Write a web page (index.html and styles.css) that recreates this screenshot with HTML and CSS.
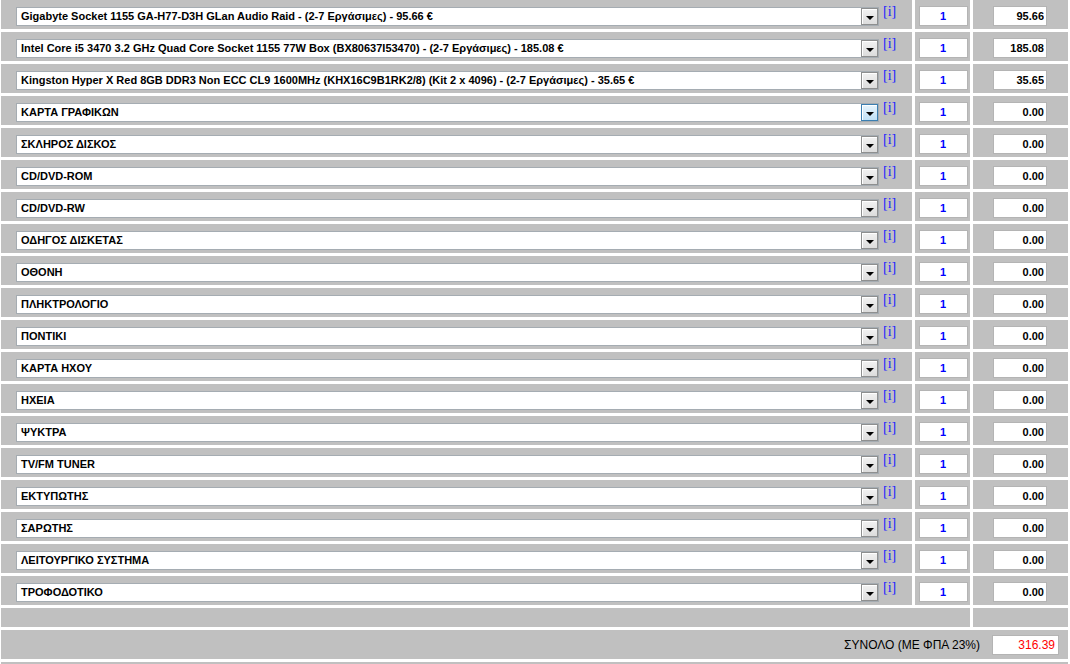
FILE: index.html
```html
<!DOCTYPE html>
<html lang="el">
<head>
    <meta charset="UTF-8">
    <meta name="viewport" content="width=device-width, initial-scale=1.0">
    <title>Σύνθεση Υπολογιστή</title>
    <link rel="stylesheet" href="styles.css">
</head>
<body>
    <div class="builder">
        <div class="cell part"><div class="combo"><span class="combo-text">Gigabyte Socket 1155 GA-H77-D3H GLan Audio Raid - (2-7 Εργάσιμες) - 95.66 €</span><span class="combo-btn"><span class="arrow"></span></span></div><a href="#" class="info">[i]</a></div>
        <div class="cell qty"><input class="qty-box" type="text" value="1" readonly></div>
        <div class="cell price"><input class="price-box" type="text" value="95.66" readonly></div>

        <div class="cell part"><div class="combo"><span class="combo-text">Intel Core i5 3470 3.2 GHz Quad Core Socket 1155 77W Box (BX80637I53470) - (2-7 Εργάσιμες) - 185.08 €</span><span class="combo-btn"><span class="arrow"></span></span></div><a href="#" class="info">[i]</a></div>
        <div class="cell qty"><input class="qty-box" type="text" value="1" readonly></div>
        <div class="cell price"><input class="price-box" type="text" value="185.08" readonly></div>

        <div class="cell part"><div class="combo"><span class="combo-text">Kingston Hyper X Red 8GB DDR3 Non ECC CL9 1600MHz (KHX16C9B1RK2/8) (Kit 2 x 4096) - (2-7 Εργάσιμες) - 35.65 €</span><span class="combo-btn"><span class="arrow"></span></span></div><a href="#" class="info">[i]</a></div>
        <div class="cell qty"><input class="qty-box" type="text" value="1" readonly></div>
        <div class="cell price"><input class="price-box" type="text" value="35.65" readonly></div>

        <div class="cell part"><div class="combo"><span class="combo-text">ΚΑΡΤΑ ΓΡΑΦΙΚΩΝ</span><span class="combo-btn hover"><span class="arrow"></span></span></div><a href="#" class="info">[i]</a></div>
        <div class="cell qty"><input class="qty-box" type="text" value="1" readonly></div>
        <div class="cell price"><input class="price-box" type="text" value="0.00" readonly></div>

        <div class="cell part"><div class="combo"><span class="combo-text">ΣΚΛΗΡΟΣ ΔΙΣΚΟΣ</span><span class="combo-btn"><span class="arrow"></span></span></div><a href="#" class="info">[i]</a></div>
        <div class="cell qty"><input class="qty-box" type="text" value="1" readonly></div>
        <div class="cell price"><input class="price-box" type="text" value="0.00" readonly></div>

        <div class="cell part"><div class="combo"><span class="combo-text">CD/DVD-ROM</span><span class="combo-btn"><span class="arrow"></span></span></div><a href="#" class="info">[i]</a></div>
        <div class="cell qty"><input class="qty-box" type="text" value="1" readonly></div>
        <div class="cell price"><input class="price-box" type="text" value="0.00" readonly></div>

        <div class="cell part"><div class="combo"><span class="combo-text">CD/DVD-RW</span><span class="combo-btn"><span class="arrow"></span></span></div><a href="#" class="info">[i]</a></div>
        <div class="cell qty"><input class="qty-box" type="text" value="1" readonly></div>
        <div class="cell price"><input class="price-box" type="text" value="0.00" readonly></div>

        <div class="cell part"><div class="combo"><span class="combo-text">ΟΔΗΓΟΣ ΔΙΣΚΕΤΑΣ</span><span class="combo-btn"><span class="arrow"></span></span></div><a href="#" class="info">[i]</a></div>
        <div class="cell qty"><input class="qty-box" type="text" value="1" readonly></div>
        <div class="cell price"><input class="price-box" type="text" value="0.00" readonly></div>

        <div class="cell part"><div class="combo"><span class="combo-text">ΟΘΟΝΗ</span><span class="combo-btn"><span class="arrow"></span></span></div><a href="#" class="info">[i]</a></div>
        <div class="cell qty"><input class="qty-box" type="text" value="1" readonly></div>
        <div class="cell price"><input class="price-box" type="text" value="0.00" readonly></div>

        <div class="cell part"><div class="combo"><span class="combo-text">ΠΛΗΚΤΡΟΛΟΓΙΟ</span><span class="combo-btn"><span class="arrow"></span></span></div><a href="#" class="info">[i]</a></div>
        <div class="cell qty"><input class="qty-box" type="text" value="1" readonly></div>
        <div class="cell price"><input class="price-box" type="text" value="0.00" readonly></div>

        <div class="cell part"><div class="combo"><span class="combo-text">ΠΟΝΤΙΚΙ</span><span class="combo-btn"><span class="arrow"></span></span></div><a href="#" class="info">[i]</a></div>
        <div class="cell qty"><input class="qty-box" type="text" value="1" readonly></div>
        <div class="cell price"><input class="price-box" type="text" value="0.00" readonly></div>

        <div class="cell part"><div class="combo"><span class="combo-text">ΚΑΡΤΑ ΗΧΟΥ</span><span class="combo-btn"><span class="arrow"></span></span></div><a href="#" class="info">[i]</a></div>
        <div class="cell qty"><input class="qty-box" type="text" value="1" readonly></div>
        <div class="cell price"><input class="price-box" type="text" value="0.00" readonly></div>

        <div class="cell part"><div class="combo"><span class="combo-text">ΗΧΕΙΑ</span><span class="combo-btn"><span class="arrow"></span></span></div><a href="#" class="info">[i]</a></div>
        <div class="cell qty"><input class="qty-box" type="text" value="1" readonly></div>
        <div class="cell price"><input class="price-box" type="text" value="0.00" readonly></div>

        <div class="cell part"><div class="combo"><span class="combo-text">ΨΥΚΤΡΑ</span><span class="combo-btn"><span class="arrow"></span></span></div><a href="#" class="info">[i]</a></div>
        <div class="cell qty"><input class="qty-box" type="text" value="1" readonly></div>
        <div class="cell price"><input class="price-box" type="text" value="0.00" readonly></div>

        <div class="cell part"><div class="combo"><span class="combo-text">TV/FM TUNER</span><span class="combo-btn"><span class="arrow"></span></span></div><a href="#" class="info">[i]</a></div>
        <div class="cell qty"><input class="qty-box" type="text" value="1" readonly></div>
        <div class="cell price"><input class="price-box" type="text" value="0.00" readonly></div>

        <div class="cell part"><div class="combo"><span class="combo-text">ΕΚΤΥΠΩΤΗΣ</span><span class="combo-btn"><span class="arrow"></span></span></div><a href="#" class="info">[i]</a></div>
        <div class="cell qty"><input class="qty-box" type="text" value="1" readonly></div>
        <div class="cell price"><input class="price-box" type="text" value="0.00" readonly></div>

        <div class="cell part"><div class="combo"><span class="combo-text">ΣΑΡΩΤΗΣ</span><span class="combo-btn"><span class="arrow"></span></span></div><a href="#" class="info">[i]</a></div>
        <div class="cell qty"><input class="qty-box" type="text" value="1" readonly></div>
        <div class="cell price"><input class="price-box" type="text" value="0.00" readonly></div>

        <div class="cell part"><div class="combo"><span class="combo-text">ΛΕΙΤΟΥΡΓΙΚΟ ΣΥΣΤΗΜΑ</span><span class="combo-btn"><span class="arrow"></span></span></div><a href="#" class="info">[i]</a></div>
        <div class="cell qty"><input class="qty-box" type="text" value="1" readonly></div>
        <div class="cell price"><input class="price-box" type="text" value="0.00" readonly></div>

        <div class="cell part"><div class="combo"><span class="combo-text">ΤΡΟΦΟΔΟΤΙΚΟ</span><span class="combo-btn"><span class="arrow"></span></span></div><a href="#" class="info">[i]</a></div>
        <div class="cell qty"><input class="qty-box" type="text" value="1" readonly></div>
        <div class="cell price"><input class="price-box" type="text" value="0.00" readonly></div>

        <!-- empty spacer row -->
        <div class="cell spacer wide"></div>
        <div class="cell spacer"></div>

        <!-- total -->
        <div class="cell total">
            <span class="total-label">ΣΥΝΟΛΟ (ΜΕ ΦΠΑ 23%)</span>
            <input class="total-box" type="text" value="316.39" readonly>
        </div>

        <div class="cell footer"></div>
    </div>
</body>
</html>
```

FILE: styles.css
```css
body {
    margin: 0;
    background-color: #fff;
    font-family: "Liberation Sans", Arial, sans-serif;
    color: #000;
}

.builder {
    display: grid;
    grid-template-columns: 911px 55px 95px;
    gap: 3px;
    padding-left: 1px;
}

.cell {
    background-color: #c0c0c0;
    height: 29px;
    box-sizing: border-box;
}

.part {
    display: flex;
    align-items: flex-start;
    padding: 7px 0 0 15px;
}

.combo {
    width: 863px;
    height: 19px;
    box-sizing: border-box;
    border: 1px solid #a5acb2;
    background-color: #fff;
    display: flex;
    align-items: center;
}

.combo-text {
    flex: 1;
    padding-left: 4px;
    font-size: 11px;
    font-weight: bold;
    white-space: nowrap;
    overflow: hidden;
    margin-top: -1px;
}

.combo-btn {
    width: 17px;
    height: 17px;
    box-sizing: border-box;
    border: 1px solid #8e8f8f;
    box-shadow: inset 1px 1px 0 #fff;
    background: linear-gradient(#f2f2f2, #dcdcdc);
    display: flex;
    align-items: center;
    justify-content: center;
}

.combo-btn.hover {
    border-color: #3c7fb1;
    background: linear-gradient(#e8f4fc, #bfe0f6);
}

.arrow {
    width: 0;
    height: 0;
    border-left: 4px solid transparent;
    border-right: 4px solid transparent;
    border-top: 4px solid #000;
    margin-top: 2px;
}

.info {
    margin: -2px 0 0 4px;
    font-family: "Liberation Serif", "Times New Roman", serif;
    font-size: 14px;
    line-height: 14px;
    color: #2020ff;
    text-decoration: none;
}

.qty {
    display: flex;
    justify-content: center;
    padding: 6px 0 0 1px;
}

.price {
    display: flex;
    justify-content: center;
    padding: 6px 1px 0 0;
}

.qty-box, .price-box, .total-box {
    height: 20px;
    box-sizing: border-box;
    margin: 0;
    border: 1px solid #b4b4b4;
    background-color: #fff;
    font-family: "Liberation Sans", Arial, sans-serif;
    outline: none;
}

.qty-box {
    width: 49px;
    padding: 0;
    text-align: center;
    font-size: 11px;
    font-weight: bold;
    color: #0000ff;
}

.price-box {
    width: 54px;
    padding: 0 2px 0 0;
    text-align: right;
    font-size: 11px;
    font-weight: bold;
    color: #000;
}

.spacer {
    height: 19px;
}

.spacer.wide {
    grid-column: span 2;
}

.total {
    grid-column: 1 / -1;
    display: flex;
    justify-content: flex-end;
    align-items: center;
    padding-right: 9px;
}

.total-label {
    font-size: 12px;
    margin-right: 12px;
}

.total-box {
    width: 67px;
    padding: 0 3px 0 0;
    text-align: right;
    font-size: 12px;
    color: #ff0000;
}

.footer {
    grid-column: 1 / -1;
}
```
